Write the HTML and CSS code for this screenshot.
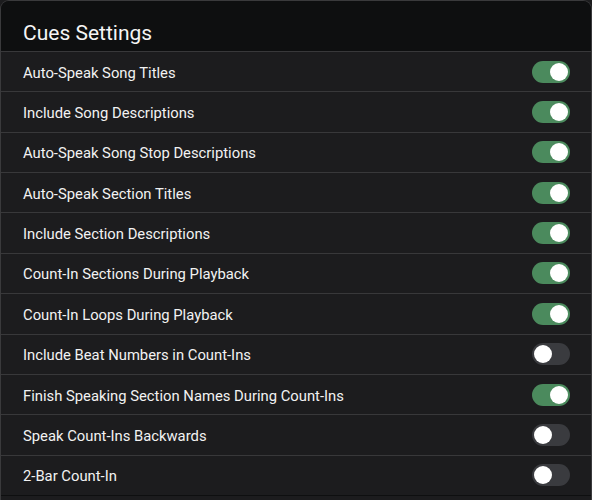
FILE: index.html
```html
<!DOCTYPE html>
<html>
<head>
    <title>Cues Settings</title>
    <link rel="stylesheet" href="styles.css">
</head>
<body>
    <div class="panel">
        <div class="panel-header">Cues Settings</div>
        <ul class="settings">
            <li class="row"><span>Auto-Speak Song Titles</span><span class="toggle on"></span></li>
            <li class="row"><span>Include Song Descriptions</span><span class="toggle on"></span></li>
            <li class="row"><span>Auto-Speak Song Stop Descriptions</span><span class="toggle on"></span></li>
            <li class="row"><span>Auto-Speak Section Titles</span><span class="toggle on"></span></li>
            <li class="row"><span>Include Section Descriptions</span><span class="toggle on"></span></li>
            <li class="row"><span>Count-In Sections During Playback</span><span class="toggle on"></span></li>
            <li class="row"><span>Count-In Loops During Playback</span><span class="toggle on"></span></li>
            <li class="row"><span>Include Beat Numbers in Count-Ins</span><span class="toggle"></span></li>
            <li class="row"><span>Finish Speaking Section Names During Count-Ins</span><span class="toggle on"></span></li>
            <li class="row"><span>Speak Count-Ins Backwards</span><span class="toggle"></span></li>
            <li class="row"><span>2-Bar Count-In</span><span class="toggle"></span></li>
        </ul>
    </div>
</body>
</html>
```

FILE: styles.css
```css
body {
    margin: 0;
    background-color: #1c1c1e;
    font-family: Roboto, "Noto Sans", sans-serif;
    color: #f2f2f2;
}
.panel {
    width: 592px;
    height: 500px;
    box-sizing: border-box;
    border: 1px solid #3a3a3c;
    border-bottom: none;
    border-radius: 9px 9px 0 0;
    background-color: #1c1c1e;
    overflow: hidden;
}
.panel-header {
    height: 51px;
    box-sizing: border-box;
    padding: 19px 0 0 22px;
    background-color: #0e0f10;
    border-bottom: 1px solid #38383a;
    font-size: 21px;
    line-height: 26px;
    color: #f5f5f5;
}
.settings {
    list-style-type: none;
    margin: 0;
    padding: 0;
}
.row {
    height: 40.36px;
    box-sizing: border-box;
    padding: 2px 21px 0 22px;
    border-bottom: 1px solid #38383a;
    display: flex;
    align-items: center;
    justify-content: space-between;
    font-size: 14.8px;
}
.row:last-child {
    border-bottom-color: #0e0f10;
}
.toggle {
    position: relative;
    width: 38px;
    height: 22px;
    margin-top: -2px;
    border-radius: 11px;
    background-color: #3a3b3f;
}
.toggle::after {
    content: "";
    position: absolute;
    top: 2px;
    left: 2px;
    width: 18px;
    height: 18px;
    border-radius: 50%;
    background-color: #fff;
}
.toggle.on {
    background-color: #4b8a5d;
}
.toggle.on::after {
    left: 18px;
}
```
